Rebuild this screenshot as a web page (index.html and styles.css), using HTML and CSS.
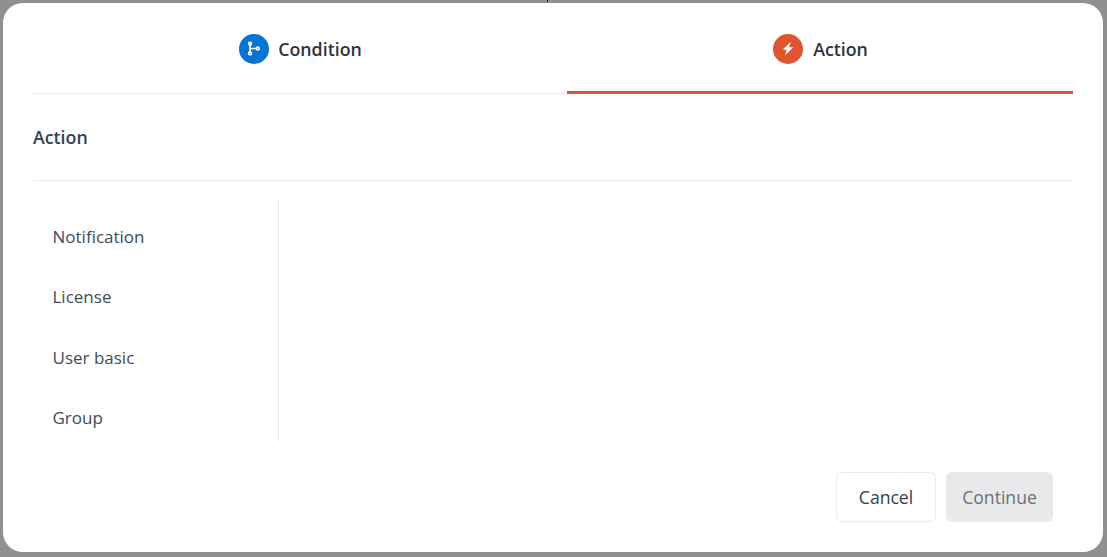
FILE: index.html
```html
<!DOCTYPE html>
<html lang="en">

<head>
  <meta charset="UTF-8">
  <meta name="viewport" content="width=device-width, initial-scale=1.0">
  <title>Action</title>
  <link rel="stylesheet" href="styles.css">
</head>

<body>
  <span class="backdrop-speck"></span>

  <div class="modal">
    <div class="tabs">
      <div class="tab tab-condition">
        <span class="tab-icon icon-blue">
          <svg width="16" height="16" viewBox="0 0 16 16" fill="none" stroke="#fff" stroke-width="1.6">
            <circle cx="4" cy="2.6" r="1.4"/>
            <circle cx="4" cy="12.4" r="1.4"/>
            <circle cx="11.8" cy="7.5" r="1.4"/>
            <path d="M4 4v7M4 7.5h6.4"/>
          </svg>
        </span>
        <span>Condition</span>
      </div>
      <div class="tab tab-action">
        <span class="tab-icon icon-orange">
          <svg width="16" height="16" viewBox="0 0 16 16">
            <path d="M10.8 .8 2.7 8.7h3.9L5 14.6l8.3-8.4H9z" fill="#fff"/>
          </svg>
        </span>
        <span>Action</span>
      </div>
    </div>

    <h2 class="section-title">Action</h2>

    <div class="body">
      <ul class="side-list">
        <li>Notification</li>
        <li>License</li>
        <li>User basic</li>
        <li>Group</li>
      </ul>
      <div class="content"></div>
    </div>

    <div class="footer">
      <button class="btn btn-cancel">Cancel</button>
      <button class="btn btn-continue" disabled>Continue</button>
    </div>
  </div>
</body>

</html>
```

FILE: styles.css
```css
* {
  margin: 0;
  padding: 0;
  box-sizing: border-box;
}

html,
body {
  height: 100%;
}

body {
  font-family: "Open Sans", "Noto Sans", sans-serif;
  background: #8f908f;
  color: #344054;
  padding: 3px 4px 5px 3px;
  overflow: hidden;
}

.backdrop-speck {
  position: absolute;
  top: 0;
  left: 547px;
  width: 1px;
  height: 2px;
  background: #222;
}

.modal {
  height: 549px;
  background: #fff;
  border-radius: 20px;
  padding: 0 30px 0 29px;
  display: flex;
  flex-direction: column;
}

.tabs {
  display: flex;
  height: 91px;
  flex-shrink: 0;
}

.tab {
  display: flex;
  align-items: center;
  justify-content: center;
  gap: 10px;
  padding-left: 1px;
  font-size: 17.8px;
  font-weight: 600;
  line-height: 24px;
  color: #303338;
}

.tab-condition {
  width: 535px;
  gap: 9px;
  padding-left: 2px;
  padding-top: 2px;
  border-bottom: 1px solid #e8e8e8;
}

.tab-action {
  width: 506px;
  padding-top: 4px;
  border-bottom: 3px solid #d9553a;
}

.tab-icon {
  width: 30px;
  height: 30px;
  border-radius: 50%;
  display: flex;
  align-items: center;
  justify-content: center;
}

.icon-blue {
  background: #0874d4;
}

.icon-orange {
  background: #df5530;
}

.section-title {
  height: 87px;
  margin-left: 1px;
  display: flex;
  align-items: center;
  font-size: 17.8px;
  font-weight: 600;
  line-height: 24px;
  color: #344054;
  border-bottom: 1px solid #e8e8e8;
  flex-shrink: 0;
}

.body {
  display: flex;
  margin: 20px 0 0 1px;
  height: 241px;
  flex-shrink: 0;
}

.side-list {
  width: 246px;
  list-style: none;
  padding-top: 11.6px;
  border-right: 1px solid #e8e8e8;
  display: flex;
  flex-direction: column;
  gap: 12.4px;
}

.side-list li {
  height: 48px;
  padding-left: 19.5px;
  display: flex;
  align-items: center;
  font-size: 17px;
  color: #3f4a5c;
}

.content {
  flex: 1;
}

.footer {
  display: flex;
  justify-content: flex-end;
  gap: 10px;
  margin-top: 30px;
  padding-right: 20px;
}

.btn {
  height: 50px;
  border-radius: 6px;
  font-family: inherit;
  font-size: 17.6px;
  font-weight: 500;
}

.btn-cancel {
  width: 100px;
  background: #fff;
  border: 1px solid #e8eaec;
  color: #344054;
}

.btn-continue {
  width: 107px;
  background: #e8e9ea;
  border: none;
  color: #6c7077;
}
```
